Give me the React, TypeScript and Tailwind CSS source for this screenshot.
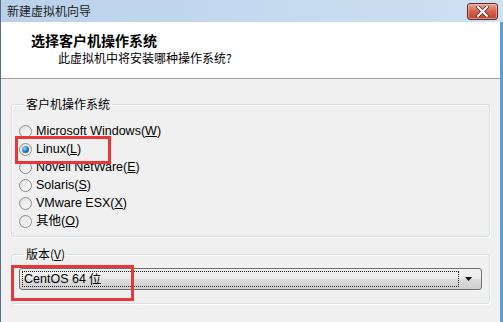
import { useState } from "react";

const options = [
  { name: "Microsoft Windows", key: "W" },
  { name: "Linux", key: "L" },
  { name: "Novell NetWare", key: "E" },
  { name: "Solaris", key: "S" },
  { name: "VMware ESX", key: "X" },
  { name: "其他", key: "O" },
];

function Radio({ checked }: { checked: boolean }) {
  return (
    <span className="w-[13px] h-[13px] rounded-full border border-[#8f8f8f] bg-gradient-to-br from-[#dcdcdc] to-[#fdfdfd] flex items-center justify-center shrink-0">
      <span className="w-[9px] h-[9px] rounded-full bg-gradient-to-br from-[#e6e6e6] to-[#f8f8f8] flex items-center justify-center">
        {checked && (
          <span className="w-[7px] h-[7px] rounded-full bg-[radial-gradient(circle_at_35%_35%,#8fd3ff,#1b6cae_60%,#0b3e74)]" />
        )}
      </span>
    </span>
  );
}

export default function App() {
  const [os, setOs] = useState("L");
  return (
    <div
      className="w-[503px] h-[322px] relative overflow-hidden bg-[#f0f0f0] flex flex-col border-l border-[#5a6d82] text-[12px] text-black"
      style={{ fontFamily: '"Liberation Sans", "Noto Sans CJK SC", sans-serif' }}
    >
      {/* title bar */}
      <div className="h-[22px] shrink-0 flex items-center bg-gradient-to-r from-[#b9d1ea] to-[#cfe1f3] pl-[6px] relative">
        <span className="leading-none text-[#1a1a1a]" style={{ fontFamily: '"Noto Sans CJK SC", sans-serif' }}>新建虚拟机向导</span>
        <div className="absolute right-[5px] top-[3px] w-[31px] h-[17px] rounded-[3px] border border-[#5e2a2a] bg-gradient-to-b from-[#e8a796] via-[#d2614a] to-[#c2432c] flex items-center justify-center shadow-[inset_0_0_0_1px_rgba(255,210,200,0.5)]">
          <svg width="13" height="11" viewBox="0 0 13 11">
            <path d="M2 1 L11 10 M11 1 L2 10" stroke="#5a3030" strokeWidth="3.6" strokeLinecap="square" />
            <path d="M2 1 L11 10 M11 1 L2 10" stroke="#ffffff" strokeWidth="2" strokeLinecap="square" />
          </svg>
        </div>
      </div>

      {/* header */}
      <div className="h-[57px] shrink-0 bg-white border-b border-[#a0a0a0] border-r-[3px] border-r-[#5b9fd8] pt-[9px]" style={{ fontFamily: '"Noto Sans CJK SC", sans-serif' }}>
        <div className="ml-[30px] text-[14px] font-bold leading-[18px]">选择客户机操作系统</div>
        <div className="ml-[57px] leading-[16px] mt-[1px]">此虚拟机中将安装哪种操作系统?</div>
      </div>

      {/* body */}
      <div className="flex-1 pl-[10px] pr-[10px] pt-[17px] border-r-[3px] border-[#5b9fd8]">
        <fieldset className="border border-[#d5dfe5] rounded-[3px] shadow-[inset_1px_1px_0_#fff,1px_1px_0_#fff] pl-[7px] pb-[6px]">
          <legend className="ml-[5px] px-[2px] leading-[16px]" style={{ fontFamily: '"Noto Sans CJK SC", sans-serif' }}>客户机操作系统</legend>
          <div className="pt-[10px] flex flex-col">
            {options.map((o) => (
              <label key={o.key} className="h-[18px] flex items-center gap-[4px] cursor-default text-[12.5px]" onClick={() => setOs(o.key)}>
                <Radio checked={os === o.key} />
                <span className="leading-none">
                  {o.name}(<span className="underline">{o.key}</span>)
                </span>
              </label>
            ))}
          </div>
        </fieldset>

        <fieldset className="mt-[9px] border border-[#d5dfe5] rounded-[3px] shadow-[inset_1px_1px_0_#fff,1px_1px_0_#fff] pl-[7px] pr-[7px] pb-[13px]">
          <legend className="ml-[5px] px-[2px] leading-[16px]" style={{ fontFamily: '"Noto Sans CJK SC", sans-serif' }}>
            版本(<span className="underline">V</span>)
          </legend>
          <div className="mt-[6px] h-[22px] rounded-[3px] border border-[#707070] bg-[linear-gradient(#f2f2f2_0%,#ebebeb_50%,#dddddd_50%,#cfcfcf_100%)] flex items-center pl-[2px] pr-[4px]">
            <div className="flex-1 h-[16px] border border-dotted border-[#222] flex items-center pl-[1px] text-[12.5px]">
              CentOS 64 <span className="ml-[3px]" style={{ fontFamily: '"Noto Sans CJK SC", sans-serif' }}>位</span>
            </div>
            <svg width="16" height="16" viewBox="0 0 16 16" className="ml-[2px]">
              <path d="M4 6 L11 6 L7.5 10 Z" fill="#111" />
            </svg>
          </div>
        </fieldset>
      </div>

      {/* red highlight marks */}
      <div className="absolute left-[14px] top-[136px] w-[96px] h-[28px] border-[3px] border-[#e8363a]" />
      <div className="absolute left-[10px] top-[265px] w-[123px] h-[36px] border-[3px] border-[#e8363a]" />
    </div>
  );
}
